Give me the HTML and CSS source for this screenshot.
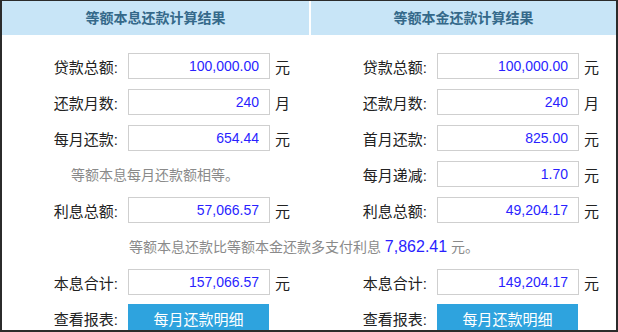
FILE: index.html
```html
<!DOCTYPE html>
<html lang="zh-CN">
<head>
  <meta charset="UTF-8">
  <meta name="viewport" content="width=device-width, initial-scale=1.0">
  <title>还款计算结果</title>
  <link rel="stylesheet" href="styles.css">
</head>
<body>

  <div class="frame">
    <div class="heads">
      <h2 class="head">等额本息还款计算结果</h2>
      <h2 class="head">等额本金还款计算结果</h2>
    </div>

    <div class="cols top">
      <div class="col">
        <div class="row"><label>贷款总额:</label><input class="val" readonly value="100,000.00"><span class="unit">元</span></div>
        <div class="row"><label>还款月数:</label><input class="val" readonly value="240"><span class="unit">月</span></div>
        <div class="row"><label>每月还款:</label><input class="val" readonly value="654.44"><span class="unit">元</span></div>
        <div class="row"><p class="tip">等额本息每月还款额相等。</p></div>
        <div class="row"><label>利息总额:</label><input class="val" readonly value="57,066.57"><span class="unit">元</span></div>
      </div>
      <div class="col">
        <div class="row"><label>贷款总额:</label><input class="val" readonly value="100,000.00"><span class="unit">元</span></div>
        <div class="row"><label>还款月数:</label><input class="val" readonly value="240"><span class="unit">月</span></div>
        <div class="row"><label>首月还款:</label><input class="val" readonly value="825.00"><span class="unit">元</span></div>
        <div class="row"><label>每月递减:</label><input class="val" readonly value="1.70"><span class="unit">元</span></div>
        <div class="row"><label>利息总额:</label><input class="val" readonly value="49,204.17"><span class="unit">元</span></div>
      </div>
    </div>

    <p class="diff">等额本息还款比等额本金还款多支付利息 <b>7,862.41</b> 元。</p>

    <div class="cols">
      <div class="col">
        <div class="row"><label>本息合计:</label><input class="val" readonly value="157,066.57"><span class="unit">元</span></div>
        <div class="row"><label>查看报表:</label><button class="btn">每月还款明细</button></div>
      </div>
      <div class="col">
        <div class="row"><label>本息合计:</label><input class="val" readonly value="149,204.17"><span class="unit">元</span></div>
        <div class="row"><label>查看报表:</label><button class="btn">每月还款明细</button></div>
      </div>
    </div>
  </div>

</body>
</html>
```

FILE: styles.css
```css
body {
  margin: 0;
  padding: 0;
  font-family: "Liberation Sans", "Noto Sans CJK SC", sans-serif;
  font-size: 15px;
  color: #222;
  background-color: #fff;
}
.frame {
  box-sizing: border-box;
  height: 332px;
  overflow: hidden;
  border: 2px solid #2b2b2b;
  border-top-width: 1px;
  background-color: #fff;
}
.heads,
.cols {
  display: grid;
  grid-template-columns: 307px 305px;
  column-gap: 2px;
}
.head {
  margin: 0;
  height: 34px;
  line-height: 34px;
  text-align: center;
  font-size: 14px;
  font-weight: bold;
  color: #35698a;
  background-color: #c8e5f7;
}
.cols.top {
  padding-top: 18px;
}
.col {
  display: flex;
  flex-direction: column;
  gap: 10px;
}
.row {
  display: flex;
  align-items: center;
  height: 26px;
}
.row label {
  width: 116px;
  margin-right: 10px;
  text-align: right;
}
.val {
  box-sizing: border-box;
  width: 142px;
  height: 26px;
  padding: 0 10px;
  border: 1px solid #cfcfcf;
  outline: none;
  font-family: inherit;
  font-size: 14px;
  color: #2a1fff;
  text-align: right;
  background-color: #fff;
}
.unit {
  margin-left: 5px;
}
.tip {
  margin: 0 0 0 69px;
  font-size: 14px;
  color: #8a8a8a;
}
.diff {
  margin: 0;
  padding: 11px 10px 9px 0;
  height: 26px;
  line-height: 26px;
  text-align: center;
  font-size: 14px;
  color: #8a8a8a;
}
.diff b {
  font-weight: normal;
  font-size: 16px;
  color: #2a1fff;
}
.btn {
  box-sizing: border-box;
  width: 141px;
  height: 28px;
  flex-shrink: 0;
  border: none;
  padding: 0;
  font-family: inherit;
  font-size: 15px;
  color: #fff;
  background-color: #2ea3de;
  cursor: pointer;
}
.btn:hover {
  background-color: #238fc4;
}
```
